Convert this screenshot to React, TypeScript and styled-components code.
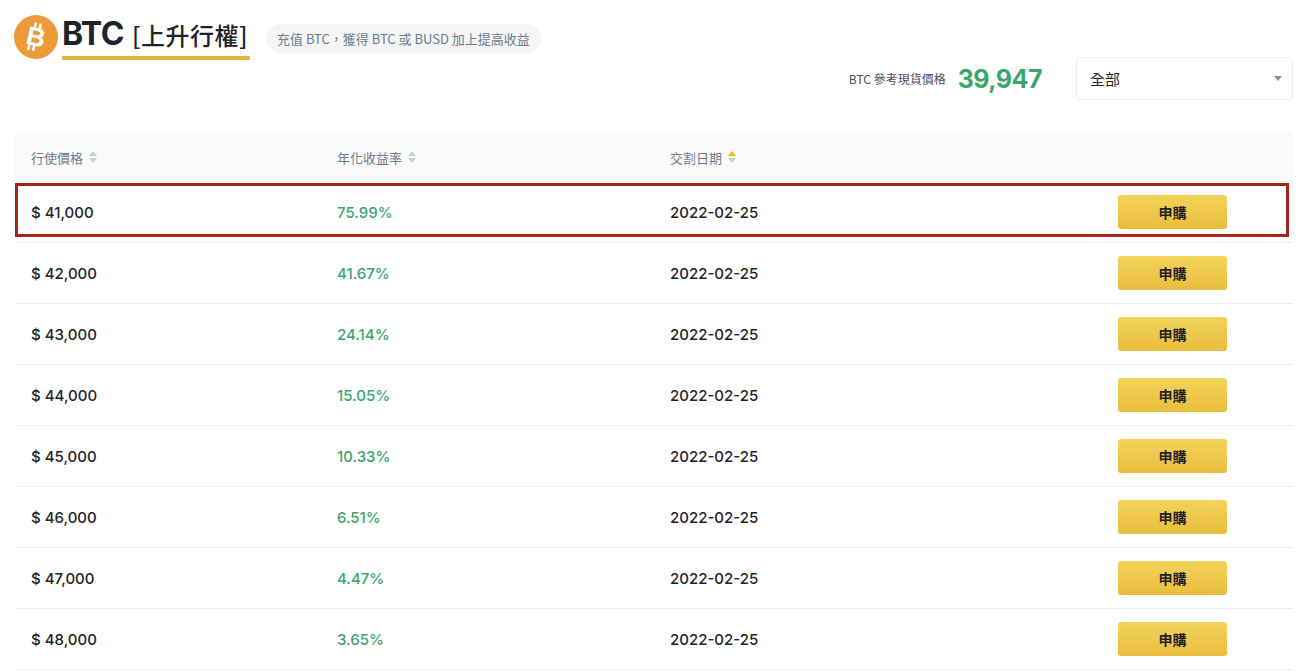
import React from "react";
import styled, { createGlobalStyle } from "styled-components";

const Global = createGlobalStyle`
  body { margin: 0; background: #fff; font-family: "Inter", "Noto Sans CJK TC", sans-serif; color: #1e2329; }
`;

const Page = styled.div`
  padding: 14px 17px 0 14px;
`;
const Top = styled.div`
  display: flex; align-items: flex-start; justify-content: space-between; height: 118px;
`;
const TitleWrap = styled.div`display: flex; align-items: center; gap: 2px;`;
const Title = styled.div`
  display: flex; align-items: baseline; gap: 8px; padding: 0 2px 4px 0;
  border-bottom: 4px solid #e0b93e; margin-left: 2px; margin-top: 2px;
`;
const Big = styled.span`font-size: 32px; font-weight: 700; letter-spacing: -0.5px; line-height: 36px;`;
const Tag = styled.span`font-size: 24px; font-weight: 500; font-family: "Noto Sans CJK TC", sans-serif; line-height: 30px; letter-spacing: 0.5px;`;
const Pill = styled.div`
  margin-left: 14px; background: #f5f5f5; border-radius: 15px; padding: 0 11px;
  height: 29px; display: flex; align-items: center; font-size: 13px; color: #707a8a;
  font-family: "Noto Sans CJK TC", sans-serif; margin-top: 2px;
`;
const Right = styled.div`display: flex; align-items: center; margin-top: 43px;`;
const PriceLabel = styled.span`font-size: 12px; color: #474d57; font-family: "Noto Sans CJK TC", sans-serif; margin-right: 12px;`;
const PriceVal = styled.span`font-size: 25px; font-weight: 700; color: #3aa66b; margin-right: 34px; letter-spacing: -0.5px;`;
const Select = styled.div`
  width: 217px; height: 43px; border: 1px solid #eaecef; border-radius: 3px; box-sizing: border-box;
  display: flex; align-items: center; justify-content: space-between; padding: 0 10px 0 13px;
  font-size: 15px; font-family: "Noto Sans CJK TC", sans-serif;
`;
const Caret = styled.span`width: 0; height: 0; border-left: 4px solid transparent; border-right: 4px solid transparent; border-top: 5px solid #848e9c;`;

const Table = styled.div``;
const Grid = `display: grid; grid-template-columns: 306px 333px 1fr 175px; align-items: center;`;
const Head = styled.div`
  ${Grid}; height: 50px; background: #fafafa; padding-left: 17px;
  font-size: 13px; color: #707a8a; font-family: "Noto Sans CJK TC", sans-serif;
`;
const HCell = styled.div`display: flex; align-items: center; gap: 6px;`;
const Row = styled.div`
  ${Grid}; height: 61px; padding-left: 17px; box-sizing: border-box;
  border-bottom: 1px solid #eaecef; position: relative;
  font-size: 15px; font-weight: 500;
`;
const Highlight = styled.div`
  position: absolute; left: 1px; right: 4px; top: 1px; bottom: 5px; border: 3px solid #a9261f; pointer-events: none;
`;
const Green = styled.div`color: #3aa66b;`;
const Btn = styled.button`
  width: 109px; height: 34px; border: none; border-radius: 3px;
  background: linear-gradient(#f3d35a, #e9bd3d); font-size: 14px; font-weight: 600;
  font-family: "Noto Sans CJK TC", sans-serif; color: #1e2329;
`;

const Sort = ({ active }: { active?: boolean }) => (
  <svg width="8" height="12" viewBox="0 0 8 12">
    <path d="M4 0L8 5H0z" fill={active ? "#f0b90b" : "#c8cdd3"} />
    <path d="M4 12L0 7h8z" fill="#c8cdd3" />
  </svg>
);

const rows = [
  ["41,000", "75.99%"], ["42,000", "41.67%"], ["43,000", "24.14%"], ["44,000", "15.05%"],
  ["45,000", "10.33%"], ["46,000", "6.51%"], ["47,000", "4.47%"], ["48,000", "3.65%"],
];

export default function App() {
  return (
    <Page>
      <Global />
      <Top>
        <TitleWrap>
          <svg width="44" height="44" viewBox="0 0 44 44">
            <circle cx="22" cy="22" r="22" fill="#ec9b3b" />
            <text x="22" y="31" textAnchor="middle" fill="#fff" fontSize="26" fontWeight="700" fontFamily="Liberation Sans" transform="rotate(12 22 22)">B</text>
            <path d="M19 8v5M24 8v5M17 31v5M22 31v5" stroke="#fff" strokeWidth="2.5" transform="rotate(12 22 22)" />
          </svg>
          <Title><Big>BTC</Big><Tag>[上升行權]</Tag></Title>
          <Pill>充值 BTC，獲得 BTC 或 BUSD 加上提高收益</Pill>
        </TitleWrap>
        <Right>
          <PriceLabel>BTC 參考現貨價格</PriceLabel>
          <PriceVal>39,947</PriceVal>
          <Select>全部<Caret /></Select>
        </Right>
      </Top>
      <Table>
        <Head>
          <HCell>行使價格<Sort /></HCell>
          <HCell>年化收益率<Sort /></HCell>
          <HCell>交割日期<Sort active /></HCell>
          <div />
        </Head>
        {rows.map(([p, r], i) => (
          <Row key={p}>
            {i === 0 && <Highlight />}
            <div>$ {p}</div>
            <Green>{r}</Green>
            <div>2022-02-25</div>
            <div><Btn>申購</Btn></div>
          </Row>
        ))}
      </Table>
    </Page>
  );
}
